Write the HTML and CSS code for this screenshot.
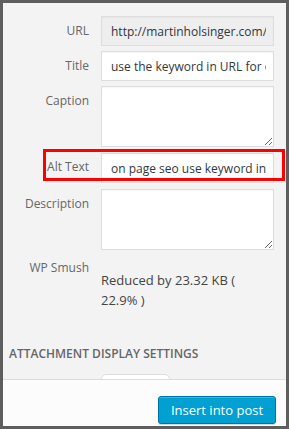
FILE: index.html
```html
<!DOCTYPE html>
<html>
<head>
<meta charset="utf-8">
<link rel="stylesheet" href="styles.css">
</head>
<body>
<div class="frame">
  <div class="content">
    <div class="fields">
      <label class="lbl">URL</label>
      <input class="field readonly" type="text" value="http://martinholsinger.com/wp-content/uploads/2015/07/image.png" readonly>
      <label class="lbl">Title</label>
      <input class="field" type="text" value="use the keyword in URL for on page seo">
      <label class="lbl">Caption</label>
      <textarea class="field area"></textarea>
      <label class="lbl alt-lbl">Alt Text</label>
      <div class="alt-wrap">
        <input class="field" type="text" value="on page seo use keyword in">
      </div>
      <label class="lbl">Description</label>
      <textarea class="field area desc"></textarea>
      <div class="lbl smush-lbl">WP Smush</div>
      <div class="smush">Reduced by 23.32 KB ( 22.9% )</div>
    </div>
    <h2 class="heading">Attachment Display Settings</h2>
    <div class="select-peek"></div>
    <div class="highlight"></div>
  </div>
  <div class="footer">
    <button class="btn" type="button">Insert into post</button>
  </div>
</div>
</body>
</html>
```
FILE: styles.css
```css
* { box-sizing: border-box; }
html, body { margin: 0; padding: 0; }
body {
  width: 289px;
  height: 429px;
  background: #5e5e5e;
  padding: 3px 3px 3px 3px;
  font-family: "Open Sans", "Liberation Sans", sans-serif;
  overflow: hidden;
}
.frame {
  width: 283px;
  height: 423px;
  background: #f3f3f3;
  display: flex;
  flex-direction: column;
}
.content {
  position: relative;
  flex: 1;
  overflow: hidden;
  padding-top: 13px;
}
.fields {
  display: grid;
  grid-template-columns: 86px 173px;
  column-gap: 12px;
  row-gap: 5px;
}
.lbl {
  font-size: 12px;
  line-height: 18px;
  padding-top: 6px;
  color: #666;
  text-align: right;
}
.field {
  width: 173px;
  height: 30px;
  margin: 0;
  border: 1px solid #ddd;
  background: #fff;
  color: #32373c;
  font-family: "Open Sans", "Liberation Sans", sans-serif;
  font-size: 12px;
  padding: 0 7px 0 9px;
  outline: none;
  box-shadow: inset 0 1px 2px rgba(0,0,0,0.04);
}
.readonly { background: #eee; color: #32373c; }
.area { height: 61px; resize: vertical; display: block; }
.desc { height: 61px; }
.alt-wrap { margin-top: 1px; margin-bottom: 1px; }
.smush-lbl { padding-top: 4px; }
.smush {
  font-size: 13px;
  line-height: 20px;
  color: #444;
  padding-top: 15px;
  padding-right: 25px;
}
.heading {
  margin: 36px 0 0 0;
  padding-left: 6px;
  font-size: 12px;
  font-weight: 600;
  text-transform: uppercase;
  color: #666;
  line-height: 16px;
}
.select-peek {
  width: 69px;
  height: 20px;
  margin: 12px 0 0 98px;
  background: #fff;
  border: 1px solid #ddd;
  border-radius: 5px 5px 0 0;
}
.highlight {
  position: absolute;
  left: 40px;
  top: 146px;
  width: 242px;
  height: 32px;
  border: 3px solid #ff0000;
}
.footer {
  height: 47px;
  flex: none;
  background: #fcfcfc;
  border-top: 1px solid #dddddd;
  display: flex;
  justify-content: flex-end;
  align-items: flex-start;
  padding: 16px 10px 0 0;
}
.btn {
  width: 118px;
  height: 28px;
  background: #00a0d2;
  border: 1px solid #0073aa;
  border-radius: 3px;
  color: #fff;
  font-family: "Open Sans", "Liberation Sans", sans-serif;
  font-size: 13px;
  padding: 0 10px 1px;
  box-shadow: inset 0 1px 0 rgba(120,200,230,0.5), 0 1px 0 rgba(0,0,0,0.15);
}
```
